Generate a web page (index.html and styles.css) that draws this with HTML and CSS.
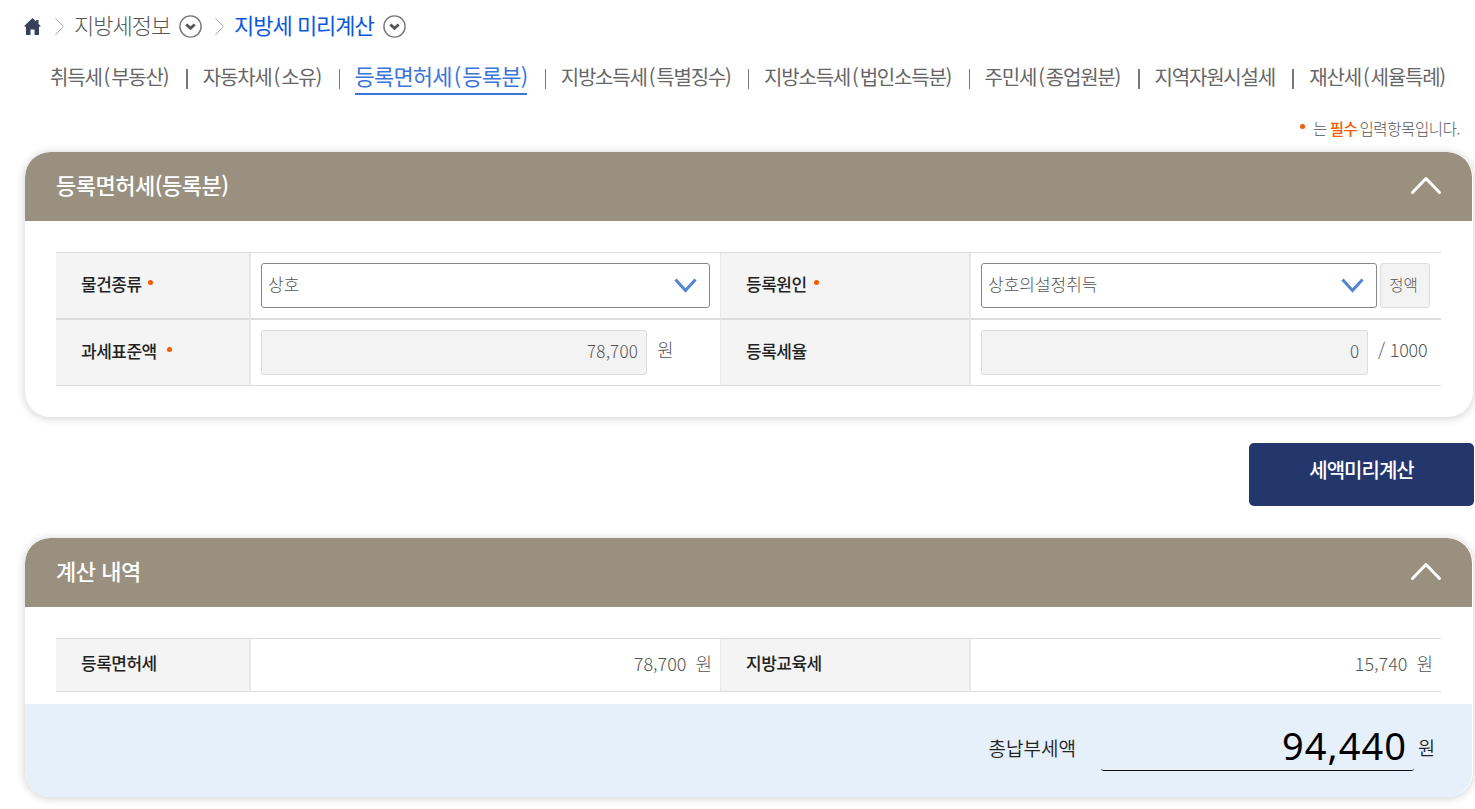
FILE: index.html
```html
<!DOCTYPE html>
<html lang="ko">
  <head>
  <meta charset="utf-8">
  <title>지방세 미리계산</title>
  <link rel="stylesheet" href="styles.css">
  </head>
  <body>

  <div class="breadcrumb">
    <svg class="home" width="17" height="17" viewBox="0 0 17 17"><path d="M8.5 0 L0 8.3 L2 8.8 V17 H6.5 V11.5 H10.5 V17 H15 V8.8 L17 8.3 L14.5 5.9 V2 H12.2 V3.6 Z" fill="#37415c"/></svg>
    <svg class="sep" width="9" height="17" viewBox="0 0 9 17"><path d="M0.5 0.5 L8.3 8.5 L0.5 16.5" fill="none" stroke="#aaa"/></svg>
    <a class="crumb">지방세정보</a>
    <svg class="drop" width="23" height="23" viewBox="0 0 23 23"><circle cx="11.5" cy="11.5" r="10.6" fill="#fff" stroke="#777" stroke-width="1.4"/><path d="M7.3 9.5 L11.5 13.3 L15.7 9.5" fill="none" stroke="#555" stroke-width="2.8"/></svg>
    <svg class="sep sep2" width="9" height="17" viewBox="0 0 9 17"><path d="M0.5 0.5 L8.3 8.5 L0.5 16.5" fill="none" stroke="#aaa"/></svg>
    <a class="crumb current">지방세 미리계산</a>
    <svg class="drop" width="23" height="23" viewBox="0 0 23 23"><circle cx="11.5" cy="11.5" r="10.6" fill="#fff" stroke="#777" stroke-width="1.4"/><path d="M7.3 9.5 L11.5 13.3 L15.7 9.5" fill="none" stroke="#555" stroke-width="2.8"/></svg>
  </div>

  <ul class="tabs">
    <li>취득세<em>(</em>부동산)</li>
    <li>자동차세<em>(</em>소유)</li>
    <li class="on"><span>등록면허세<em>(</em>등록분)</span></li>
    <li>지방소득세<em>(</em>특별징수)</li>
    <li>지방소득세<em>(</em>법인소득분)</li>
    <li>주민세<em>(</em>종업원분)</li>
    <li>지역자원시설세</li>
    <li>재산세<em>(</em>세율특례)</li>
  </ul>

  <p class="notice"><i class="dot"></i><span>는</span><b>필수</b><span>입력항목입니다.</span></p>

  <div class="card">
    <div class="card-head">
      <h3>등록면허세(등록분)</h3>
      <svg width="32" height="20" viewBox="0 0 32 20"><path d="M2.5 17.5 L16 3.5 L29.5 17.5" fill="none" stroke="#fff" stroke-width="3" stroke-linecap="round" stroke-linejoin="round"/></svg>
    </div>
    <div class="grid form">
      <div class="th">물건종류<i class="dot"></i></div>
      <div class="td">
        <div class="select wide"><span>상호</span><svg width="23" height="15" viewBox="0 0 23 15"><path d="M1.5 1.5 L11.5 12.5 L21.5 1.5" fill="none" stroke="#5584d2" stroke-width="3"/></svg></div>
      </div>
      <div class="th">등록원인<i class="dot far"></i></div>
      <div class="td">
        <div class="select reason"><span>상호의설정취득</span><svg width="23" height="15" viewBox="0 0 23 15"><path d="M1.5 1.5 L11.5 12.5 L21.5 1.5" fill="none" stroke="#5584d2" stroke-width="3"/></svg></div>
        <div class="box fixed">정액</div>
      </div>
      <div class="th">과세표준액<i class="dot gap"></i></div>
      <div class="td">
        <div class="box amount">78,700</div><span class="unit">원</span>
      </div>
      <div class="th">등록세율</div>
      <div class="td">
        <div class="box rate">0</div><span class="unit per">/ 1000</span>
      </div>
    </div>
  </div>

  <div class="buttons"><a class="btn">세액미리계산</a></div>

  <div class="card">
    <div class="card-head">
      <h3>계산 내역</h3>
      <svg width="32" height="20" viewBox="0 0 32 20"><path d="M2.5 17.5 L16 3.5 L29.5 17.5" fill="none" stroke="#fff" stroke-width="3" stroke-linecap="round" stroke-linejoin="round"/></svg>
    </div>
    <div class="grid result">
      <div class="th">등록면허세</div>
      <div class="td"><span class="num">78,700</span><span class="won">원</span></div>
      <div class="th">지방교육세</div>
      <div class="td"><span class="num">15,740</span><span class="won">원</span></div>
    </div>
    <div class="total">
      <span class="total-label">총납부세액</span>
      <span class="total-value">94,440</span>
      <span class="total-won">원</span>
    </div>
  </div>

  </body>
</html>
```
FILE: styles.css
```css
* {
  box-sizing: border-box;
}
body {
  margin: 0;
  height: 809px;
  overflow: hidden;
  background: #fff;
  color: #555;
  font-family: "Noto Sans CJK KR", sans-serif;
  white-space: nowrap;
}
svg {
  display: block;
  flex: none;
}
.breadcrumb {
  display: flex;
  align-items: center;
  height: 53px;
  padding-left: 24px;
}
.sep {
  margin: 0 10px 0 14px;
}
.sep2 {
  margin-left: 13px;
}
.crumb {
  width: 105px;
  margin-top: -5px;
  font-size: 22px;
  font-weight: 300;
  letter-spacing: -1px;
}
.current {
  width: 149px;
  color: #0b57e0;
  font-weight: 400;
}
/* tab menu */
.tabs {
  display: flex;
  align-items: center;
  justify-content: space-between;
  height: 50px;
  margin: 0;
  padding: 0 30px 0 50px;
  list-style: none;
  font-size: 20px;
  line-height: 28px;
  letter-spacing: -1.2px;
  color: #666;
}
.tabs li {
  display: flex;
  align-items: center;
  height: 50px;
  padding-bottom: 3px;
}
.tabs em {
  margin: 0 2px;
  font-style: normal;
}
.tabs li + li:before {
  content: "";
  width: 2px;
  height: 20px;
  margin: 5px 15px 0 0;
  background: #777;
}
.tabs li:nth-child(n+3):nth-child(-n+6):before {
  width: 1px;
}
.tabs .on {
  padding-bottom: 0;
  font-size: 22px;
  letter-spacing: -0.8px;
  color: #3a74dc;
}
.tabs .on:before {
  margin-top: 2px;
}
.tabs .on span {
  height: 34px;
  line-height: 29px;
  border-bottom: 2px solid #3a74dc;
}
.notice {
  display: flex;
  align-items: center;
  justify-content: flex-end;
  height: 49px;
  margin: 0;
  padding: 0 15px 0 0;
  font-size: 15.5px;
  font-weight: 300;
  letter-spacing: -0.4px;
}
.notice b {
  margin: 0 2px 0 3px;
  color: #f15a00;
  font-weight: 500;
}
.dot {
  display: inline-block;
  width: 5px;
  height: 5px;
  margin: -2px 0 0 6px;
  border-radius: 50%;
  background: #f95a00;
}
.dot.far {
  margin-left: 7px;
}
.dot.gap {
  margin-left: 10px;
}
.notice .dot {
  margin-right: 8px;
}
.card {
  width: 1448px;
  margin-left: 25px;
  padding-right: 1px;
  border-radius: 25px;
  background: #fff;
  box-shadow: 0 1px 10px rgba(0, 0, 0, 0.2);
  overflow: hidden;
}
.card-head {
  display: flex;
  align-items: center;
  justify-content: space-between;
  height: 69px;
  padding: 0 30px 3px 31px;
  border-radius: 25px 25px 0 0;
  background: #9a907f;
}
h3 {
  margin: -2px 0 0;
  color: #fff;
  font-size: 22px;
  font-weight: 500;
  letter-spacing: -0.5px;
}
/* label / value table */
.grid {
  display: grid;
  grid-template-columns: 195px 469px 251px 470px;
  width: 1385px;
  margin: 31px 0 0 31px;
  border-top: 1px solid #ddd;
}
.form {
  grid-template-rows: 67px 66px;
  margin-bottom: 31px;
}
.result {
  grid-template-rows: 53px;
  margin-bottom: 12px;
}
.th, .td {
  display: flex;
  align-items: center;
  border-bottom: 1px solid #ddd;
}
.form .th:nth-child(-n+4), .form .td:nth-child(-n+4) {
  border-bottom-width: 2px;
}
.th {
  padding: 0 0 4px 25px;
  border-right: 2px solid #e8e8e8;
  background: #f4f4f4;
  color: #222;
  font-size: 17px;
  font-weight: 500;
  letter-spacing: -0.5px;
}
.result .th {
  padding-bottom: 5px;
}
.th:nth-child(4n+3) {
  border-left: 1px solid #e8e8e8;
}
.td {
  padding-left: 10px;
}
.select, .box {
  display: flex;
  align-items: center;
  height: 45px;
  border: 1px solid #888;
  border-radius: 3px;
  background: #fff;
  font-size: 17px;
  font-weight: 300;
}
.select {
  justify-content: space-between;
  padding: 0 12px 0 6px;
}
.select span {
  margin-top: -4px;
}
.wide {
  width: 449px;
}
.reason {
  width: 396px;
}
.box {
  justify-content: flex-end;
  border-color: #ddd;
  background: #f3f3f3;
  padding: 0 8px 4px 0;
}
.fixed {
  width: 50px;
  margin-left: 3px;
  justify-content: center;
  padding-right: 3px;
  font-size: 15.5px;
}
.amount {
  width: 386px;
  letter-spacing: 0.2px;
}
.rate {
  width: 387px;
}
.unit {
  margin: -7px 0 0 10px;
  font-size: 18px;
  font-weight: 300;
}
.per {
  letter-spacing: -0.2px;
}
.buttons {
  display: flex;
  justify-content: flex-end;
  margin: 26px 1px 32px 0;
}
.btn {
  width: 225px;
  height: 63px;
  border-radius: 5px;
  background: #23376c;
  color: #fff;
  font-size: 20px;
  font-weight: 500;
  line-height: 54px;
  letter-spacing: -1px;
  text-align: center;
}
.result .td {
  justify-content: flex-end;
  padding: 0 8px 4px 0;
  font-size: 18px;
  font-weight: 300;
}
.won {
  margin-left: 9px;
}
.total {
  display: flex;
  align-items: center;
  justify-content: flex-end;
  height: 93px;
  padding-right: 37px;
  border-radius: 0 0 25px 25px;
  background: #e5f0fa;
  color: #222;
  font-size: 19px;
  font-weight: 350;
}
.total-label {
  margin: -7px 25px 0 0;
}
.total-value {
  width: 313px;
  height: 51px;
  margin: -10px 4px 0 0;
  padding-right: 7px;
  border-bottom: 1px solid #111;
  border-radius: 3px;
  color: #000;
  font-family: "Noto Sans", sans-serif;
  font-size: 38px;
  font-weight: 400;
  line-height: 50px;
  letter-spacing: 1px;
  text-align: right;
}
.total-won {
  margin-top: -7px;
  font-size: 18.5px;
}
```
